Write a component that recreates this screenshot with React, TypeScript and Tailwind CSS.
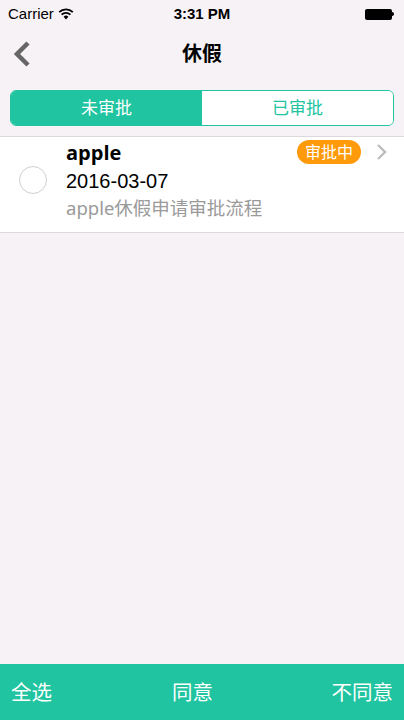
const font = { fontFamily: '"Noto Sans", "Noto Sans CJK SC", sans-serif' };

const App = () => {
  return (
    <div className="w-[404px] h-[720px] flex flex-col bg-[#f7f2f6] overflow-hidden" style={font}>
      {/* Status bar */}
      <div className="h-[28px] flex items-center justify-between px-2 relative text-[15px] text-black">
        <div className="flex items-center gap-1">
          <span style={{ fontFamily: '"Liberation Sans", sans-serif' }}>Carrier</span>
          <svg width="16" height="12" viewBox="0 0 16 12">
            <path d="M8 11.5 L5.6 8.8 A3.4 3.4 0 0 1 10.4 8.8 Z" fill="#000" />
            <path d="M3.6 6.7 A6.3 6.3 0 0 1 12.4 6.7" stroke="#000" strokeWidth="1.8" fill="none" />
            <path d="M1.2 4.2 A9.6 9.6 0 0 1 14.8 4.2" stroke="#000" strokeWidth="1.8" fill="none" />
          </svg>
        </div>
        <span className="absolute left-0 right-0 text-center font-semibold" style={{ fontFamily: '"Liberation Sans", sans-serif' }}>3:31 PM</span>
        <div className="flex items-center pr-[2px]">
          <div className="w-[27px] h-[11px] bg-black rounded-[2px]" />
          <div className="w-[2px] h-[4px] bg-black rounded-r-sm" />
        </div>
      </div>

      {/* Nav bar */}
      <div className="h-[52px] flex items-center relative">
        <svg className="ml-[12px]" width="20" height="28" viewBox="0 0 20 28">
          <path d="M16 3 L5 14 L16 25" stroke="#666" strokeWidth="4.5" fill="none" strokeLinejoin="miter" />
        </svg>
        <span className="absolute left-0 right-0 text-center text-[20px] font-bold text-black">休假</span>
      </div>

      {/* Segmented */}
      <div className="px-[10px] pt-[10px]">
        <div className="h-[36px] flex rounded-[6px] border border-[#20c4a0] overflow-hidden">
          <div className="flex-1 bg-[#20c4a0] text-white flex items-center justify-center text-[17px]">未审批</div>
          <div className="flex-1 bg-white text-[#20c4a0] flex items-center justify-center text-[17px]">已审批</div>
        </div>
      </div>

      {/* List */}
      <div className="mt-[10px] border-t border-b border-[#dcd8db] bg-white h-[97px] flex items-start">
        <div className="w-[66px] h-full flex items-center pl-[19px] pb-[10px]">
          <div className="w-[28px] h-[28px] rounded-full border border-[#cfcfcf]" />
        </div>
        <div className="flex-1 pt-[2px]">
          <div className="text-[20px] font-bold text-black leading-[28px]" style={{ fontFamily: '"Open Sans", "Noto Sans", sans-serif' }}>apple</div>
          <div className="text-[20px] text-black leading-[28px]" style={{ fontFamily: '"Liberation Sans", sans-serif' }}>2016-03-07</div>
          <div className="text-[18.5px] text-[#9a9a9a] leading-[26px]">apple休假申请审批流程</div>
        </div>
        <div className="flex items-center pt-[3px] pr-[16px]">
          <span className="bg-[#ff9a0a] text-white text-[16px] leading-[24px] px-[8px] rounded-full">审批中</span>
          <svg className="ml-[15px]" width="12" height="18" viewBox="0 0 12 18">
            <path d="M2 2 L9 9 L2 16" stroke="#bdbdbd" strokeWidth="2.4" fill="none" />
          </svg>
        </div>
      </div>

      <div className="flex-1" />

      {/* Bottom bar */}
      <div className="h-[56px] bg-[#20c4a0] flex items-center justify-between px-[11px] text-white text-[20.5px] relative">
        <span>全选</span>
        <span className="absolute left-[172px]">同意</span>
        <span>不同意</span>
      </div>
    </div>
  );
};

export default App;
